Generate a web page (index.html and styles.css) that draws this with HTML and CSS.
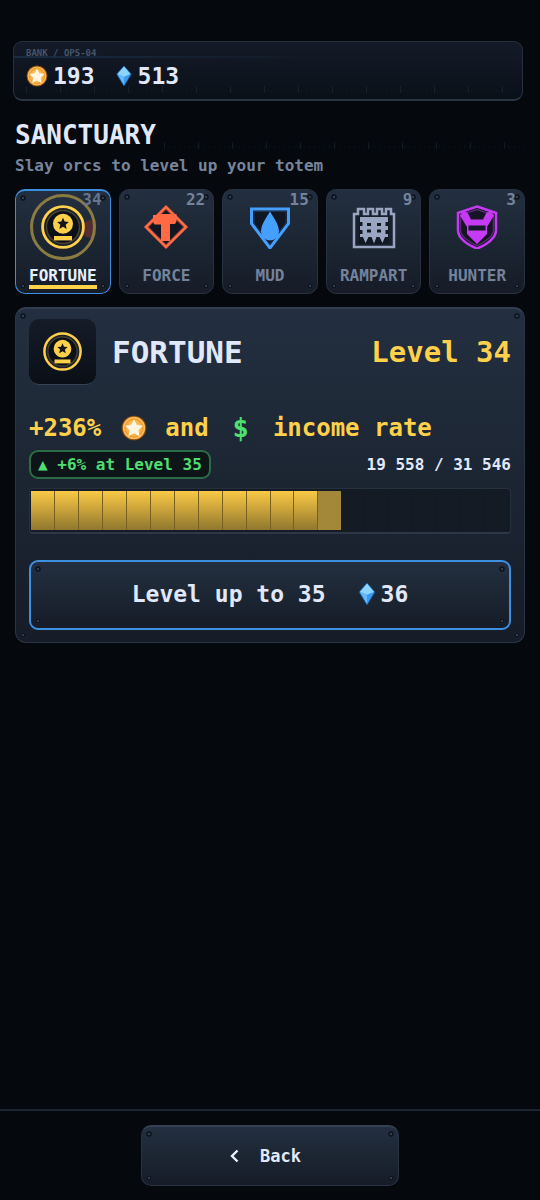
FILE: index.html
```html
<!DOCTYPE html>
<html lang="en">
<head>
<meta charset="utf-8">
<meta name="viewport" content="width=device-width, initial-scale=1">
<title>Sanctuary</title>
<link rel="stylesheet" href="styles.css">
</head>
<body>
<svg class="defs" aria-hidden="true">
  <defs>
    <radialGradient id="coinFill"><stop offset="0" stop-color="#ffd27a"/><stop offset=".7" stop-color="#f9b44c"/><stop offset="1" stop-color="#e08a1c"/></radialGradient>
    <symbol id="coin" viewBox="0 0 24 24">
      <circle cx="12" cy="12" r="11.4" fill="#8a4c0c"/>
      <circle cx="12" cy="12" r="9.6" fill="url(#coinFill)" stroke="#ffbf5a" stroke-width="1.4"/>
      <path d="M12 3.8l2.5 5.3 5.8.8-4.2 4 1 5.8-5.1-2.8-5.1 2.800 1-5.800-4.200-4 5.800-.8z" fill="#fff6e2"/>
    </symbol>
    <symbol id="gem" viewBox="0 0 18 24">
      <path d="M9 1l8 9-8 13L1 10z" fill="#2f8fe8" stroke="#16508f"/>
      <path d="M9 1.600l7.200 8.300L9 13 1.800 9.900z" fill="#8bd4ff"/>
      <path d="M1.800 9.900L9 13v9z" fill="#63b9fb"/>
      <path d="M16.200 9.900L9 13v9z" fill="#3a9af0"/>
    </symbol>
    <symbol id="totem" viewBox="0 0 44 44">
      <circle cx="22" cy="22" r="20.400" fill="#1b2029" stroke="#ffd04a" stroke-width="2.800"/>
      <circle cx="22" cy="22" r="16.500" fill="#0c1119" stroke="#4a4430" stroke-width="1.400"/>
      <circle cx="22" cy="18.800" r="10" fill="#ffd04a"/>
      <path d="M22 12.700l1.700 3.900 4.200.4-3.200 2.800 1 4.100-3.700-2.200-3.700 2.200 1-4.100-3.200-2.800 4.200-.4z" fill="#10151e"/>
      <path d="M13 31h18v4.400H13z" fill="#ffd04a"/>
    </symbol>
  </defs>
</svg>

<main class="page">
  <section class="bank" aria-label="Bank">
    <span class="bank-tag">BANK / OPS-04</span>
    <div class="balances">
      <span class="amount"><svg class="coin"><use href="#coin"/></svg>193</span>
      <span class="amount"><svg class="gem"><use href="#gem"/></svg>513</span>
    </div>
  </section>

  <header class="heading">
    <div class="heading-row"><h1>SANCTUARY</h1><span class="ticks"></span></div>
    <p>Slay orcs to level up your totem</p>
  </header>

  <nav class="tabs" aria-label="Totems">
    <button class="tab rivets active" type="button">
      <span class="count">34</span>
      <span class="halo"><svg class="tab-icon"><use href="#totem"/></svg></span>
      <span class="name">FORTUNE</span>
    </button>
    <button class="tab rivets" type="button">
      <span class="count">22</span>
      <svg class="tab-icon" viewBox="0 0 44 44">
        <path d="M22 0L44 22 22 44 0 22z" fill="#ff6a45"/>
        <path d="M22 4.500L39.500 22 22 39.500 4.500 22z" fill="#111722" stroke="#5c2f2c"/>
        <path d="M9 10h5l2-1h16.500v7.500l-1.500 2.500h-5V36h-9V19.500H10.500L9 17z" fill="#ff6a45"/>
      </svg>
      <span class="name">FORCE</span>
    </button>
    <button class="tab rivets" type="button">
      <span class="count">15</span>
      <svg class="tab-icon" viewBox="0 0 44 44">
        <path d="M3.500 4h37v14.500L22 43 3.500 18.500z" fill="#111722" stroke="#459fff" stroke-width="3"/>
        <path d="M6 6.500h32V18L22 39 6 18z" fill="none" stroke="#1c3453"/>
        <path d="M22 6.500C18 13 13 20 13 26.500a9 9 0 0 0 18 0C31 20 26 13 22 6.500z" fill="#459fff"/>
      </svg>
      <span class="name">MUD</span>
    </button>
    <button class="tab rivets" type="button">
      <span class="count">9</span>
      <svg class="tab-icon" viewBox="0 0 44 44">
        <path d="M2 9h4V4h6v5h4V4h5v5h4V4h5v5h4V4h5v5h3v33H2z" fill="#17202c" stroke="#9aa5c2" stroke-width="2.500"/>
        <path d="M7 12h30v27H7z" fill="#111923"/>
        <path d="M8 12h28v5h-2.500v4H36v4h-2.500v4H36v3h-3l-2.500 6-3-6h-3L22 38.500 19.500 32h-3l-3 6-2.500-6H8v-3h2.500v-4H8v-4h2.500v-4H8z" fill="#9aa5c2"/>
        <path d="M15 18h4v3h-4zM25 18h4v3h-4zM15 24.500h4v3h-4zM25 24.500h4v3h-4z" fill="#111923"/>
      </svg>
      <span class="name">RAMPART</span>
    </button>
    <button class="tab rivets" type="button">
      <span class="count">3</span>
      <svg class="tab-icon" viewBox="0 0 44 44">
        <path d="M22 1.500L41 8v17c0 7-7 14-19 18.500C10 39 3 32 3 25V8z" fill="#171426" stroke="#c53af3" stroke-width="2.500"/>
        <path d="M22 4.500L38.500 10v15c0 5.500-6.500 11.500-16.500 15.500C12 36.500 5.500 30.500 5.500 25V10z" fill="none" stroke="#552a70" stroke-width="1.500"/>
        <path d="M8 6.500l4.500 1 3.500 7h12l3.500-7 4.500-1 3 4-7 11.500v7L22 39 12 29v-7L5 10.500z" fill="#c53af3"/>
        <path d="M13.500 20.500h17v5h-17z" fill="#141a28"/>
      </svg>
      <span class="name">HUNTER</span>
    </button>
  </nav>

  <section class="panel rivets">
    <div class="panel-head">
      <span class="tile"><svg><use href="#totem"/></svg></span>
      <h2>FORTUNE</h2>
      <span class="level">Level 34</span>
    </div>
    <p class="effect">
      <span>+236%</span><svg class="coin"><use href="#coin"/></svg><span>and</span><span class="cash">$</span><span>income rate</span>
    </p>
    <div class="stats">
      <span class="pill">▲ +6% at Level 35</span>
      <span class="xp">19 558 / 31 546</span>
    </div>
    <div class="meter" role="progressbar" aria-label="Level progress" aria-valuemin="0" aria-valuemax="31546" aria-valuenow="19558">
      <i class="full"></i><i class="full"></i><i class="full"></i><i class="full"></i><i class="full"></i><i class="full"></i><i class="full"></i><i class="full"></i><i class="full"></i><i class="full"></i><i class="full"></i><i class="full"></i><i class="part"></i><i></i><i></i><i></i><i></i><i></i><i></i><i></i>
    </div>
    <button class="upgrade rivets" type="button">
      <span>Level up to 35</span>
      <span class="cost"><svg class="gem"><use href="#gem"/></svg>36</span>
    </button>
  </section>
</main>

<footer class="footer">
  <button class="back rivets" type="button">
    <svg viewBox="0 0 10 14"><path d="M8.500 1.500L3 7l5.500 5.500" fill="none" stroke="#e6f0ff" stroke-width="2.400"/></svg>
    <span>Back</span>
  </button>
</footer>
</body>
</html>
```
FILE: styles.css
```css
* {
  box-sizing: border-box;
}

body {
  margin: 0;
  min-height: 100vh;
  display: flex;
  flex-direction: column;
  background: #05080d;
  color: #e0e8fa;
  font-family: "DejaVu Sans Mono", monospace;
  font-weight: 700;
}

h1,
h2,
p {
  margin: 0;
}

button {
  margin: 0;
  padding: 0;
  color: inherit;
  font: inherit;
  cursor: pointer;
}

svg {
  display: block;
  flex: none;
}

.defs {
  position: absolute;
  width: 0;
  height: 0;
}

.page {
  flex: 1;
  padding: 41px 15px 24px;
}

/* Corner screws, drawn over the plate gradient */
.rivets {
  --inset: 3px;
  --rivet: radial-gradient(circle at 50% 50%, #2f4056 0 1px, #0d141e 1px 2px, #182230 3px, transparent 3px);
  --plate: linear-gradient(#232f40, #1c2633 50%, #161c28);
  background:
    var(--rivet) left var(--inset) top var(--inset) / 8px 8px no-repeat,
    var(--rivet) right var(--inset) top var(--inset) / 8px 8px no-repeat,
    var(--rivet) left var(--inset) bottom var(--inset) / 8px 8px no-repeat,
    var(--rivet) right var(--inset) bottom var(--inset) / 8px 8px no-repeat,
    var(--plate);
}

.bank {
  height: 60px;
  margin: 0 2px 0 -2px;
  padding: 5px 12px;
  border: 1px solid #27303d;
  border-bottom: 2px solid #2a3443;
  border-radius: 9px;
  background:
    repeating-linear-gradient(90deg, #18202a 0 1px, transparent 1px 34px) 12px 44px / calc(100% - 24px) 7px no-repeat,
    repeating-linear-gradient(90deg, #101720 0 1px, transparent 1px 5px) 12px 48px / calc(100% - 24px) 2px no-repeat,
    linear-gradient(90deg, #182c43, transparent 60%) 0 14px / 100% 2px no-repeat,
    linear-gradient(#141b28, #0a1018);
}

.bank-tag {
  display: block;
  color: #46546a;
  font-size: 9px;
  line-height: 12px;
}

.balances {
  display: flex;
  gap: 20px;
  margin-top: 3px;
}

.amount,
.cost {
  display: flex;
  align-items: center;
  gap: 5px;
}

.amount {
  font-size: 23px;
  line-height: 28px;
}

.coin {
  width: 22px;
  height: 22px;
}

.gem {
  width: 18px;
  height: 22px;
}

.heading {
  padding-top: 18px;
}

.heading-row {
  display: flex;
  align-items: flex-end;
  gap: 8px;
}

h1 {
  font-size: 26px;
  line-height: 32px;
}

.ticks {
  flex: 1;
  height: 7px;
  margin-bottom: 2px;
  background:
    repeating-linear-gradient(90deg, #131920 0 1px, transparent 1px 34px),
    repeating-linear-gradient(90deg, #0c1118 0 1px, transparent 1px 5px) 0 4px / 100% 2px no-repeat;
}

.heading p {
  margin-top: 5px;
  color: #77859c;
  font-size: 16px;
  line-height: 20px;
}

.tabs {
  display: grid;
  grid-template-columns: repeat(5, minmax(0, 1fr));
  gap: 8px;
  margin-top: 13px;
}

.tab {
  position: relative;
  display: flex;
  flex-direction: column;
  align-items: center;
  justify-content: space-between;
  height: 105px;
  padding: 15px 0 4px;
  border: 1px solid #273343;
  border-radius: 10px;
  color: #74839b;
  font-size: 16px;
}

.tab .count {
  position: absolute;
  top: 1px;
  right: 8px;
  line-height: 18px;
}

.tab-icon {
  width: 44px;
  height: 44px;
}

.name {
  border-bottom: 4px solid transparent;
  line-height: 19px;
}

.tab.active {
  padding: 3px 0 4px;
  border: 1px solid #3d8fe0;
  border-top-width: 2px;
}

.tab.active .count {
  top: 0;
  color: #66758e;
}

.active .name {
  border-color: #ffd04a;
  color: #e6f0ff;
}

.halo {
  display: grid;
  place-items: center;
  width: 66px;
  height: 66px;
  border: 3px solid #8a7b42;
  border-radius: 50%;
  background: radial-gradient(circle at 58px 32px, #552c30 0 8px, transparent 10px);
}

.panel {
  margin-top: 13px;
  padding: 10px 13px 12px;
  border: 1px solid #2a3545;
  border-top: 2px solid #313e51;
  border-radius: 11px;
}

.panel-head {
  display: flex;
  align-items: center;
}

.tile {
  display: grid;
  place-items: center;
  width: 67px;
  height: 66px;
  border-bottom: 1px solid #354255;
  border-radius: 10px;
  background: linear-gradient(#151c28, #0a0f17);
}

.tile svg {
  width: 39px;
  height: 39px;
}

h2 {
  margin-left: 16px;
  font-size: 31px;
  line-height: 38px;
}

.level {
  margin-left: auto;
  color: #ffd04a;
  font-size: 29px;
  line-height: 38px;
}

.effect {
  display: flex;
  align-items: center;
  margin-top: 26px;
  color: #ffd04a;
  font-size: 24px;
  line-height: 34px;
}

.effect .coin {
  width: 26px;
  height: 26px;
  margin: 0 18px 0 20px;
}

.cash {
  margin: 0 24px;
  color: #4fe06f;
  font-size: 27px;
}

.stats {
  display: flex;
  align-items: center;
  justify-content: space-between;
  margin-top: 5px;
}

.pill {
  padding: 3px 7px;
  border: 2px solid #2b6c46;
  border-radius: 9px;
  background: #0d1519;
  color: #4fdc70;
  font-size: 16px;
  line-height: 19px;
}

.xp {
  font-size: 16px;
}

.meter {
  display: flex;
  height: 46px;
  margin-top: 9px;
  padding: 2px 1px;
  border: 1px solid #263140;
  border-bottom: 2px solid #2c3747;
  border-radius: 4px;
  background: #141b25;
}

.meter i {
  flex: 1;
  border-right: 1px solid #121924;
}

.meter .full {
  border-right-color: #786021;
  background: linear-gradient(#f8c945, #d2a93c 40%, #8f772f);
}

.meter .part {
  border: 0;
  background: #a3883a;
}

.upgrade {
  display: flex;
  align-items: center;
  justify-content: center;
  gap: 32px;
  width: 100%;
  height: 70px;
  margin-top: 26px;
  padding-bottom: 2px;
  border: 2px solid #3d8fe0;
  border-radius: 9px;
  font-size: 23px;
}

.upgrade .gem {
  height: 24px;
}

.footer {
  display: flex;
  justify-content: center;
  padding: 14px 15px;
  border-top: 2px solid #1b2430;
}

.back {
  display: flex;
  align-items: center;
  justify-content: center;
  gap: 21px;
  width: 258px;
  height: 61px;
  padding-right: 10px;
  border: 1px solid #273343;
  border-top: 2px solid #344155;
  border-radius: 10px;
  font-size: 17px;
}

.back svg {
  width: 10px;
  height: 14px;
}
```
